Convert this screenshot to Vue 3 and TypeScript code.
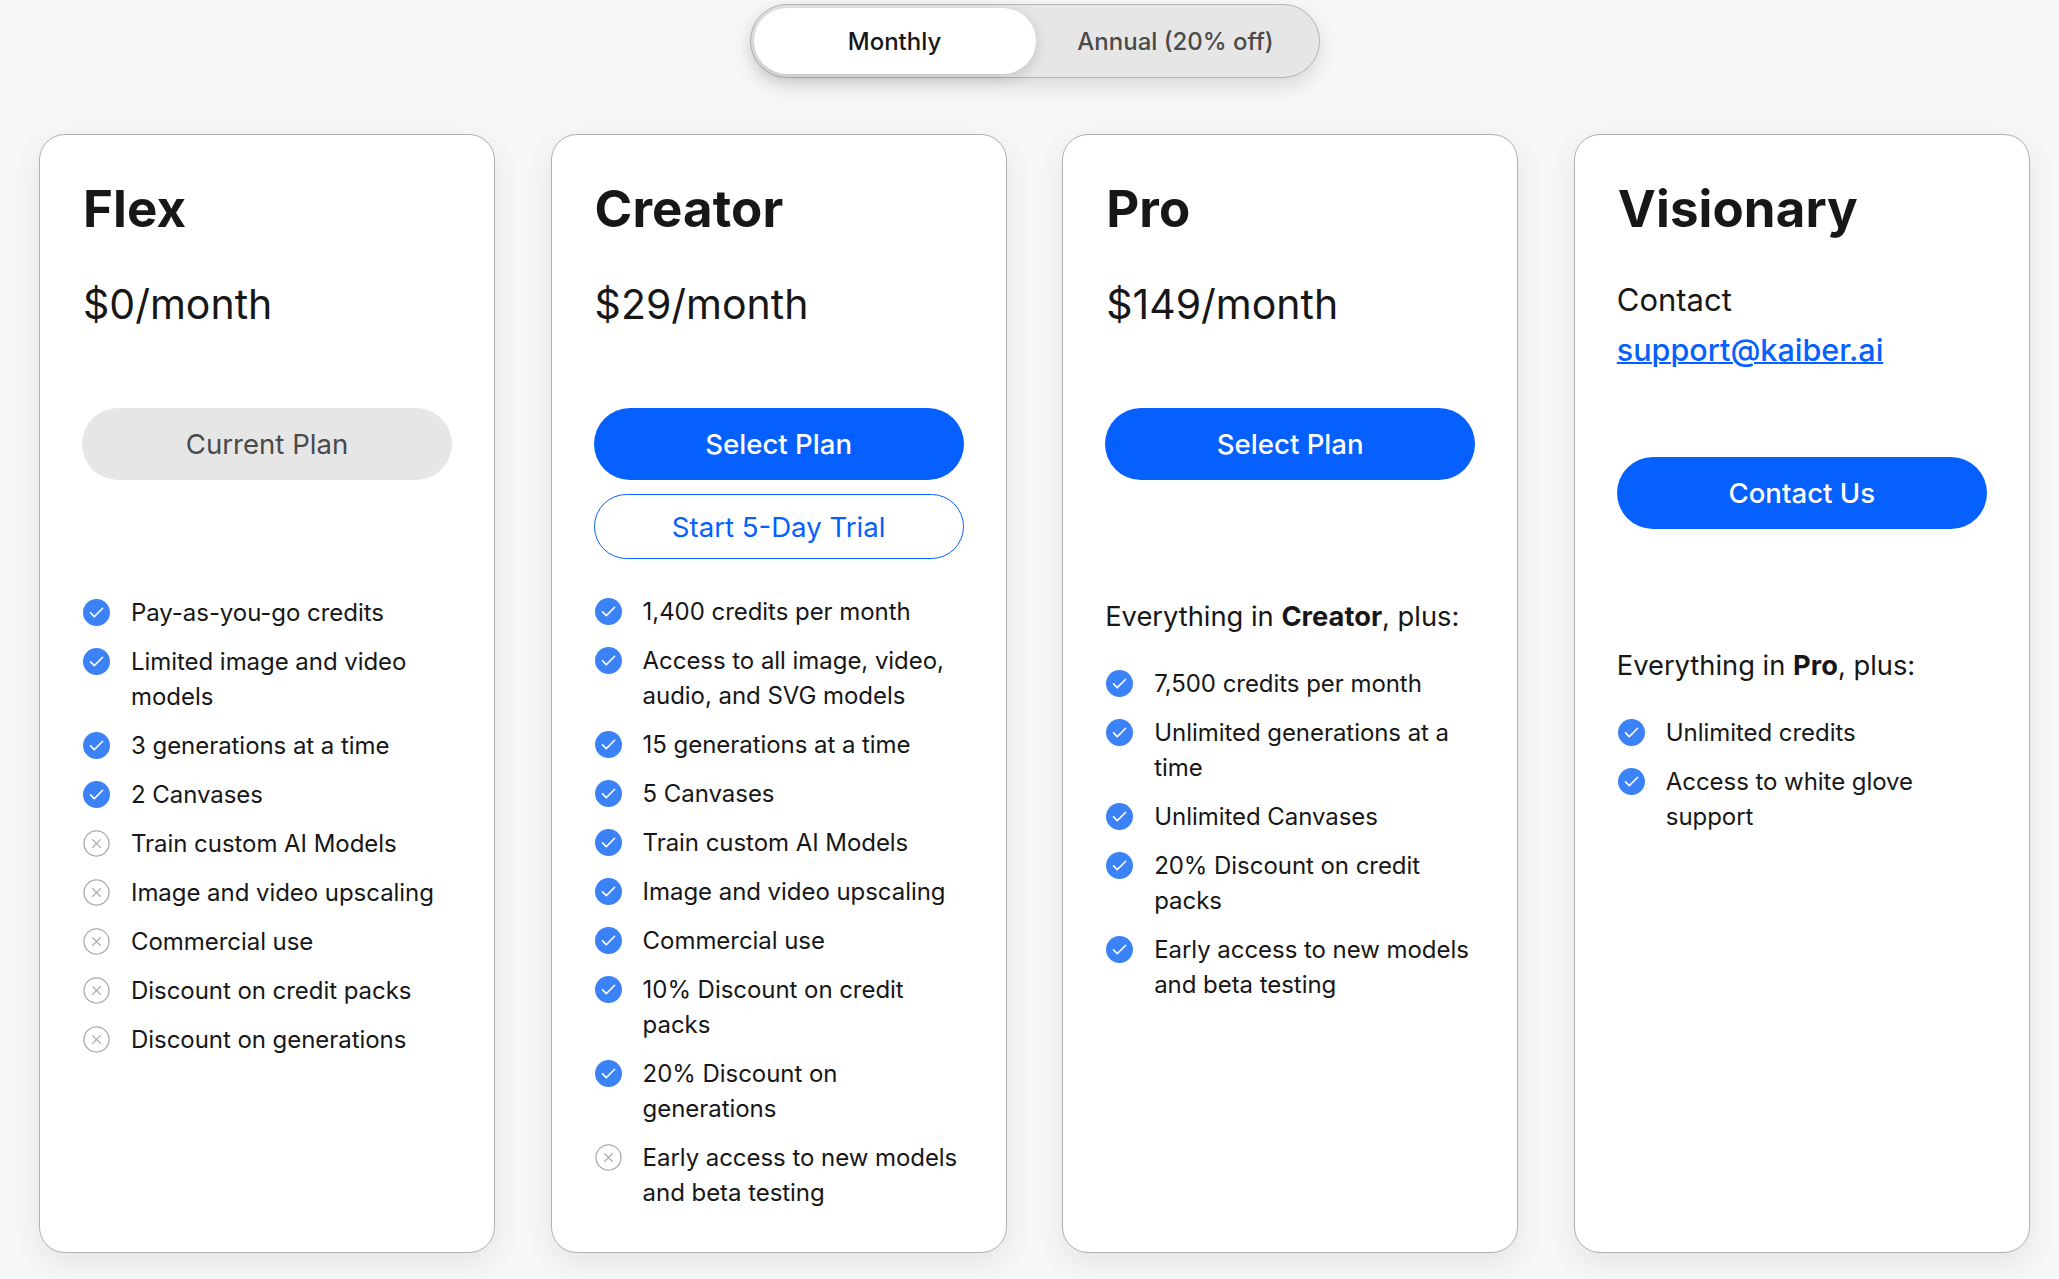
<script setup lang="ts">
interface Feature {
  text: string;
  off?: boolean;
}

interface Plan {
  name: string;
  price?: string;
  button: string;
  current?: boolean;
  trial?: boolean;
  contact?: boolean;
  base?: string;
  features: Feature[];
}

const plans: Plan[] = [
  {
    name: 'Flex',
    price: '$0/month',
    button: 'Current Plan',
    current: true,
    features: [
      { text: 'Pay-as-you-go credits' },
      { text: 'Limited image and video models' },
      { text: '3 generations at a time' },
      { text: '2 Canvases' },
      { text: 'Train custom AI Models', off: true },
      { text: 'Image and video upscaling', off: true },
      { text: 'Commercial use', off: true },
      { text: 'Discount on credit packs', off: true },
      { text: 'Discount on generations', off: true },
    ],
  },
  {
    name: 'Creator',
    price: '$29/month',
    button: 'Select Plan',
    trial: true,
    features: [
      { text: '1,400 credits per month' },
      { text: 'Access to all image, video, audio, and SVG models' },
      { text: '15 generations at a time' },
      { text: '5 Canvases' },
      { text: 'Train custom AI Models' },
      { text: 'Image and video upscaling' },
      { text: 'Commercial use' },
      { text: '10% Discount on credit packs' },
      { text: '20% Discount on generations' },
      { text: 'Early access to new models and beta testing', off: true },
    ],
  },
  {
    name: 'Pro',
    price: '$149/month',
    button: 'Select Plan',
    base: 'Creator',
    features: [
      { text: '7,500 credits per month' },
      { text: 'Unlimited generations at a time' },
      { text: 'Unlimited Canvases' },
      { text: '20% Discount on credit packs' },
      { text: 'Early access to new models and beta testing' },
    ],
  },
  {
    name: 'Visionary',
    button: 'Contact Us',
    contact: true,
    base: 'Pro',
    features: [
      { text: 'Unlimited credits' },
      { text: 'Access to white glove support' },
    ],
  },
];
</script>

<template>
  <main class="page">
    <div class="toggle">
      <button class="tab active">Monthly</button>
      <button class="tab">Annual (20% off)</button>
    </div>

    <section class="cards">
      <article v-for="plan in plans" :key="plan.name" class="card">
        <h2>{{ plan.name }}</h2>
        <p v-if="plan.price" class="price">{{ plan.price }}</p>
        <div v-else class="contact">
          <span>Contact</span>
          <a href="#">support@kaiber.ai</a>
        </div>

        <div class="actions">
          <button class="btn" :class="{ muted: plan.current }">{{ plan.button }}</button>
          <button v-if="plan.trial" class="btn outline">Start 5-Day Trial</button>
        </div>

        <p v-if="plan.base" class="intro">Everything in <strong>{{ plan.base }}</strong>, plus:</p>

        <ul :class="{ based: plan.base }">
          <li v-for="item in plan.features" :key="item.text">
            <svg v-if="!item.off" class="icon" viewBox="0 0 28 28">
              <circle cx="14" cy="14" r="14" fill="#3b82f6" />
              <path d="M7.8 14.4l3.9 3.9 8.7-8.7" fill="none" stroke="#fff" stroke-width="1.6" stroke-linecap="round" stroke-linejoin="round" />
            </svg>
            <svg v-else class="icon" viewBox="0 0 28 28">
              <circle cx="14" cy="14" r="13" fill="none" stroke="#a8a8a8" stroke-width="1.3" />
              <path d="M10 10l8 8M18 10l-8 8" fill="none" stroke="#a8a8a8" stroke-width="1.4" stroke-linecap="round" />
            </svg>
            <span>{{ item.text }}</span>
          </li>
        </ul>
      </article>
    </section>
  </main>
</template>

<style scoped>
.page {
  box-sizing: border-box;
  height: 1279px;
  padding: 4px 29px 0 39px;
  background: #f6f7f9;
  color: #171717;
  font-family: Inter, "Liberation Sans", sans-serif;
  overflow: hidden;
}

.toggle {
  box-sizing: border-box;
  display: flex;
  width: 570px;
  height: 74px;
  margin: 0 auto;
  padding: 3px;
  border: 1.3px solid #b4b4b4;
  border-radius: 37px;
  background: #e6e6e6;
  box-shadow: 0 8px 20px rgba(0, 0, 0, 0.12);
}

.tab {
  flex: 1;
  border: 0;
  border-radius: 33px;
  background: transparent;
  color: #4a4a4a;
  font: 500 24px Inter, "Liberation Sans", sans-serif;
}

.tab.active {
  flex: 0 0 282px;
  background: #fff;
  color: #171717;
  box-shadow: 0 4px 14px rgba(0, 0, 0, 0.15);
}

.cards {
  display: grid;
  grid-template-columns: repeat(4, 456px);
  column-gap: 55.6px;
  margin-top: 56px;
}

.card {
  box-sizing: border-box;
  height: 1119px;
  padding: 41px 42px 0;
  border: 1.3px solid #b0b0b0;
  border-radius: 26px;
  background: #fff;
  box-shadow: 0 10px 30px rgba(0, 0, 0, 0.08);
}

h2 {
  margin: 0 0 0 1px;
  font-size: 51px;
  line-height: 66px;
  font-weight: 700;
  letter-spacing: 0.1px;
}

.price {
  margin: 34px 0 0 1px;
  height: 132px;
  font-size: 41px;
  line-height: 56px;
  font-weight: 400;
}

.contact {
  display: flex;
  flex-direction: column;
  margin: 33px 0 0 0;
  height: 182px;
  font-size: 31px;
  line-height: 50px;
}

.contact a {
  color: #0560fd;
  font-size: 30.5px;
  font-weight: 500;
  text-decoration-thickness: 2px;
}

.actions {
  display: flex;
  flex-direction: column;
  gap: 14px;
  height: 151px;
}

.btn {
  box-sizing: border-box;
  width: 370px;
  height: 72px;
  flex: none;
  border: 0;
  border-radius: 36px;
  background: #0560fd;
  color: #fff;
  font: 450 27.6px Inter, "Liberation Sans", sans-serif;
}

.btn.muted {
  background: #e6e6e6;
  color: #4a4a4a;
  font-weight: 400;
}

.btn.outline {
  height: 65px;
  border: 1.3px solid #0560fd;
  background: #fff;
  color: #0560fd;
  font-weight: 400;
}

.intro {
  margin: 40px 0 0;
  font-size: 27.3px;
  line-height: 35px;
}

.intro strong {
  font-weight: 700;
}

ul {
  display: flex;
  flex-direction: column;
  gap: 14px;
  margin: 35px 0 0;
  padding: 0;
  list-style: none;
}

.card:first-child ul {
  margin-top: 36px;
}

ul.based {
  margin-top: 32px;
}

li {
  display: flex;
  gap: 21px;
  font-size: 24px;
  line-height: 35px;
  letter-spacing: -0.05px;
}

.icon {
  flex: none;
  width: 27px;
  height: 27px;
  margin: 4px 0 0 1px;
}
</style>

<style>
body {
  background: #f6f7f9;
}
</style>
